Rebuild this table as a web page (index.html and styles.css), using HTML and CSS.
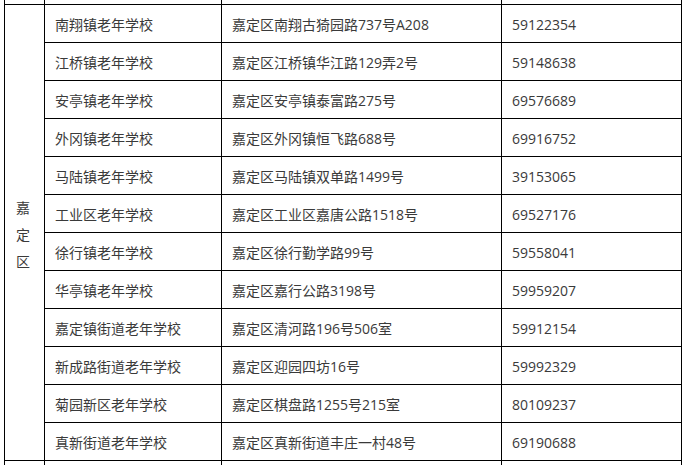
FILE: index.html
```html
<!DOCTYPE html>
<html lang="zh-CN">
<head>
<meta charset="utf-8">
<link rel="stylesheet" href="styles.css">
</head>
<body>
<table class="list">
  <colgroup>
    <col class="c-dist">
    <col class="c-name">
    <col class="c-addr">
    <col class="c-tel">
  </colgroup>
  <tr class="edge-top"><td></td><td></td><td></td><td></td></tr>
  <tr><td class="dist" rowspan="12">嘉<br>定<br>区</td><td>南翔镇老年学校</td><td>嘉定区南翔古猗园路737号A208</td><td>59122354</td></tr>
  <tr><td>江桥镇老年学校</td><td>嘉定区江桥镇华江路129弄2号</td><td>59148638</td></tr>
  <tr><td>安亭镇老年学校</td><td>嘉定区安亭镇泰富路275号</td><td>69576689</td></tr>
  <tr><td>外冈镇老年学校</td><td>嘉定区外冈镇恒飞路688号</td><td>69916752</td></tr>
  <tr><td>马陆镇老年学校</td><td>嘉定区马陆镇双单路1499号</td><td>39153065</td></tr>
  <tr><td>工业区老年学校</td><td>嘉定区工业区嘉唐公路1518号</td><td>69527176</td></tr>
  <tr><td>徐行镇老年学校</td><td>嘉定区徐行勤学路99号</td><td>59558041</td></tr>
  <tr><td>华亭镇老年学校</td><td>嘉定区嘉行公路3198号</td><td>59959207</td></tr>
  <tr><td>嘉定镇街道老年学校</td><td>嘉定区清河路196号506室</td><td>59912154</td></tr>
  <tr><td>新成路街道老年学校</td><td>嘉定区迎园四坊16号</td><td>59992329</td></tr>
  <tr><td>菊园新区老年学校</td><td>嘉定区棋盘路1255号215室</td><td>80109237</td></tr>
  <tr><td>真新街道老年学校</td><td>嘉定区真新街道丰庄一村48号</td><td>69190688</td></tr>
  <tr class="edge-bottom"><td></td><td></td><td></td><td></td></tr>
</table>
</body>
</html>
```

FILE: styles.css
```css
html, body {
  margin: 0;
  padding: 0;
  background: #ffffff;
  overflow: hidden;
}
body {
  width: 683px;
  height: 465px;
  font-family: "Open Sans", "Noto Sans CJK SC", sans-serif;
  font-size: 14px;
  color: #3a3a3a;
}
.list {
  margin-left: 4px;
  margin-top: 0;
  border-collapse: collapse;
  table-layout: fixed;
  width: 677px;
}
.c-dist { width: 40px; }
.c-name { width: 177px; }
.c-addr { width: 280px; }
.c-tel { width: 180px; }
.list tr {
  height: 38px;
}
.list td {
  border: 1px solid #000;
  padding: 4px 0 0 10px;
  line-height: 20px;
  vertical-align: middle;
  white-space: nowrap;
}
.list tr.edge-top {
  height: 4px;
}
.list tr.edge-top td {
  border-top: none;
  padding: 0;
  line-height: 0;
}
.list tr.edge-bottom {
  height: 5px;
}
.list tr.edge-bottom td {
  border-bottom: none;
  padding: 0;
  line-height: 0;
}
.list td.dist {
  padding: 4px 3px 0 0;
  text-align: center;
  line-height: 27px;
}
```
